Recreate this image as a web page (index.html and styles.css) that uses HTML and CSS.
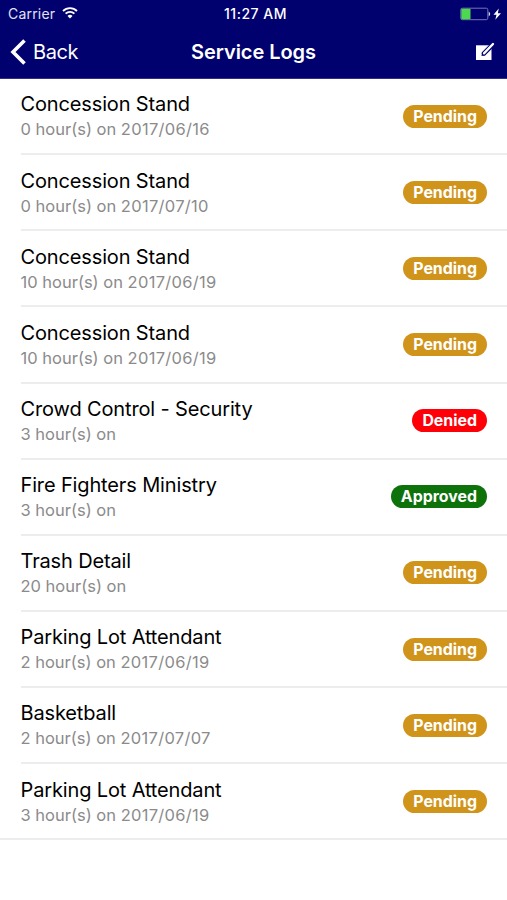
FILE: index.html
```html
<!DOCTYPE html>
<html lang="en">
<head>
<meta charset="utf-8">
<title>Service Logs</title>
<link rel="stylesheet" href="styles.css">
</head>
<body>
<header class="header">
  <div class="status">
    <div class="carrier"><span>Carrier</span>
      <svg class="wifi" width="16" height="12" viewBox="0 0 16 12" fill="none" stroke="#fff" stroke-width="1.8"><path d="M1 4a10 10 0 0 1 14 0M3.600 6.700a6.200 6.200 0 0 1 8.800 0"/><path d="M8 11.500 5.500 9a3.600 3.600 0 0 1 5 0z" fill="#fff" stroke="none"/></svg>
    </div>
    <div class="time">11:27 AM</div>
    <svg class="battery" width="42" height="14" viewBox="0 0 42 14"><rect x=".8" y="1.200" width="27" height="11.500" rx="1.500" fill="none" stroke="#7474b4"/><rect x="1.300" y="1.700" width="9.200" height="10.500" rx=".8" fill="#4cd94f"/><path d="M28.700 4.500q3 2.500 0 5z" fill="#dcdcf0"/><path d="M38.800 1.500l-5.300 6.300h3l-1.200 4.900 5.700-6.500h-3.200z" fill="#fff"/></svg>
  </div>
  <nav class="nav">
    <a class="back"><svg width="16" height="26" viewBox="0 0 16 26" fill="none" stroke="#fff" stroke-width="3.600"><path d="M14.500 1.500 3 13l11.500 11.500"/></svg><span>Back</span></a>
    <h1 class="title">Service Logs</h1>
    <svg class="edit" width="20" height="20" viewBox="0 0 20 20"><path d="M1 3.300h15.500V18H1z" fill="#fff"/><path d="M9 11.400 17.500 2.900" stroke="#00006e" stroke-width="4.600" stroke-linecap="round"/><path d="m6.500 14 .7-4 3.300 3.200z" fill="#00006e"/><path d="M9 11.400 18 2" stroke="#fff" stroke-width="2.300" stroke-linecap="round"/></svg>
  </nav>
</header>
<main class="list">
  <div class="row"><div class="text"><div class="name">Concession Stand</div><div class="sub">0 hour(s) on <span class="date">2017/06/16</span></div></div><span class="badge">Pending</span></div>
  <div class="row"><div class="text"><div class="name">Concession Stand</div><div class="sub">0 hour(s) on <span class="date">2017/07/10</span></div></div><span class="badge">Pending</span></div>
  <div class="row"><div class="text"><div class="name">Concession Stand</div><div class="sub">10 hour(s) on <span class="date">2017/06/19</span></div></div><span class="badge">Pending</span></div>
  <div class="row"><div class="text"><div class="name">Concession Stand</div><div class="sub">10 hour(s) on <span class="date">2017/06/19</span></div></div><span class="badge">Pending</span></div>
  <div class="row"><div class="text"><div class="name">Crowd Control - Security</div><div class="sub">3 hour(s) on</div></div><span class="badge denied">Denied</span></div>
  <div class="row"><div class="text"><div class="name">Fire Fighters Ministry</div><div class="sub">3 hour(s) on</div></div><span class="badge approved">Approved</span></div>
  <div class="row"><div class="text"><div class="name">Trash Detail</div><div class="sub">20 hour(s) on</div></div><span class="badge">Pending</span></div>
  <div class="row"><div class="text"><div class="name">Parking Lot Attendant</div><div class="sub">2 hour(s) on <span class="date">2017/06/19</span></div></div><span class="badge">Pending</span></div>
  <div class="row"><div class="text"><div class="name">Basketball</div><div class="sub">2 hour(s) on <span class="date">2017/07/07</span></div></div><span class="badge">Pending</span></div>
  <div class="row last"><div class="text"><div class="name">Parking Lot Attendant</div><div class="sub">3 hour(s) on <span class="date">2017/06/19</span></div></div><span class="badge">Pending</span></div>
</main>
</body>
</html>
```
FILE: styles.css
```css
* { box-sizing: border-box; }
body { margin: 0; height: 900px; background: #fff; color: #000; font-family: Inter, "Liberation Sans", sans-serif; overflow: hidden; }
.header { height: 79px; background: #00006e; color: #fff; border-bottom: 1px solid #30308a; }
.status { height: 27px; display: grid; grid-template-columns: 1fr auto 1fr; align-items: center; padding: 0 5px 0 8px; font-size: 14px; }
.carrier { display: flex; align-items: center; gap: 7px; letter-spacing: .2px; color: #e2e2f2; }
.wifi { margin-top: -1px; }
.time { font-weight: 550; font-size: 14px; letter-spacing: .5px; padding-left: 1px; }
.battery { justify-self: end; }
.nav { height: 50px; display: grid; grid-template-columns: 1fr auto 1fr; align-items: center; padding: 0 12px 0 10px; }
.back { display: flex; align-items: center; gap: 7px; font-size: 20px; letter-spacing: -.4px; }
.title { margin: 0; padding-left: 2px; font-size: 20px; font-weight: 600; letter-spacing: -.05px; }
.edit { justify-self: end; }
.row { height: 76.15px; margin-left: 20.500px; padding-right: 20px; display: flex; align-items: center; justify-content: space-between; border-bottom: 2px solid #ededee; }
.row.last { margin-left: 0; padding-left: 20.500px; }
.text { padding-top: 1.600px; }
.name { font-size: 20px; line-height: 26px; letter-spacing: -.14px; white-space: nowrap; }
.sub { font-size: 16.500px; line-height: 25px; color: #8b8b8b; white-space: nowrap; }
.date { letter-spacing: .3px; }
.badge { height: 23px; line-height: 23px; padding: 0 10px; border-radius: 12px; background: #d0941b; color: #fff; font-size: 15.900px; font-weight: 700; }
.denied { background: #ff0008; }
.approved { background: #0d720a; }
```
